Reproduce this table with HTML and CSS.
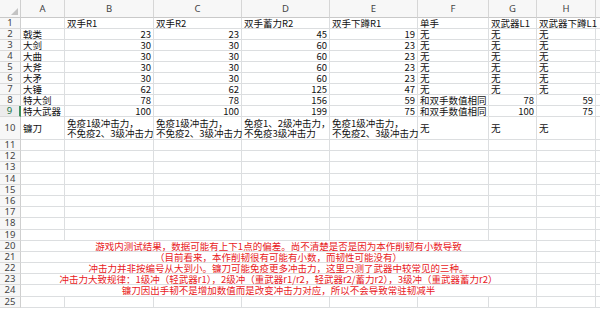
FILE: index.html
```html
<!DOCTYPE html>
<html lang="zh-CN">
<head>
<meta charset="utf-8">
<title>冲击力测试</title>
<link rel="stylesheet" href="styles.css">
</head>
<body>
<div class="sheet">
  <div class="corner"></div><div class="ch">A</div><div class="ch">B</div><div class="ch">C</div><div class="ch">D</div><div class="ch">E</div><div class="ch">F</div><div class="ch">G</div><div class="ch">H</div><div class="ch"></div>

  <div class="rh">1</div><div></div><div>双手R1</div><div>双手R2</div><div>双手蓄力R2</div><div>双手下蹲R1</div><div>单手</div><div>双武器L1</div><div>双武器下蹲L1</div><div></div>
  <div class="rh">2</div><div>戟类</div><div class="n">23</div><div class="n">23</div><div class="n">45</div><div class="n">19</div><div>无</div><div>无</div><div>无</div><div></div>
  <div class="rh">3</div><div>大剑</div><div class="n">30</div><div class="n">30</div><div class="n">60</div><div class="n">23</div><div>无</div><div>无</div><div>无</div><div></div>
  <div class="rh">4</div><div>大曲</div><div class="n">30</div><div class="n">30</div><div class="n">60</div><div class="n">23</div><div>无</div><div>无</div><div>无</div><div></div>
  <div class="rh">5</div><div>大斧</div><div class="n">30</div><div class="n">30</div><div class="n">60</div><div class="n">23</div><div>无</div><div>无</div><div>无</div><div></div>
  <div class="rh">6</div><div>大矛</div><div class="n">30</div><div class="n">30</div><div class="n">60</div><div class="n">23</div><div>无</div><div>无</div><div>无</div><div></div>
  <div class="rh">7</div><div>大锤</div><div class="n">62</div><div class="n">62</div><div class="n">125</div><div class="n">47</div><div>无</div><div>无</div><div>无</div><div></div>
  <div class="rh">8</div><div>特大剑</div><div class="n">78</div><div class="n">78</div><div class="n">156</div><div class="n">59</div><div>和双手数值相同</div><div class="n">78</div><div class="n">59</div><div></div>
  <div class="rh sel">9</div><div>特大武器</div><div class="n">100</div><div class="n">100</div><div class="n">199</div><div class="n">75</div><div>和双手数值相同</div><div class="n">100</div><div class="n">75</div><div></div>
  <div class="rh tall">10</div><div class="tall">镰刀</div><div class="tall">免疫1级冲击力，<br>不免疫2、3级冲击力</div><div class="tall">免疫1级冲击力，<br>不免疫2、3级冲击力</div><div class="tall">免疫1、2级冲击力，<br>不免疫3级冲击力</div><div class="tall">免疫1级冲击力，<br>不免疫2、3级冲击力</div><div class="tall">无</div><div class="tall">无</div><div class="tall">无</div><div></div>

  <div class="rh">11</div><div></div><div></div><div></div><div></div><div></div><div></div><div></div><div></div><div></div>
  <div class="rh">12</div><div></div><div></div><div></div><div></div><div></div><div></div><div></div><div></div><div></div>
  <div class="rh">13</div><div></div><div></div><div></div><div></div><div></div><div></div><div></div><div></div><div></div>
  <div class="rh">14</div><div></div><div></div><div></div><div></div><div></div><div></div><div></div><div></div><div></div>
  <div class="rh">15</div><div></div><div></div><div></div><div></div><div></div><div></div><div></div><div></div><div></div>
  <div class="rh">16</div><div></div><div></div><div></div><div></div><div></div><div></div><div></div><div></div><div></div>
  <div class="rh">17</div><div></div><div></div><div></div><div></div><div></div><div></div><div></div><div></div><div></div>
  <div class="rh">18</div><div></div><div></div><div></div><div></div><div></div><div></div><div></div><div></div><div></div>
  <div class="rh">19</div><div></div><div></div><div></div><div></div><div></div><div></div><div></div><div></div><div></div>
  <div class="rh">20</div><div class="note">游戏内测试结果，数据可能有上下1点的偏差。尚不清楚是否是因为本作削韧有小数导致</div><div></div><div></div>
  <div class="rh">21</div><div class="note">（目前看来，本作削韧很有可能有小数，而韧性可能没有）</div><div></div><div></div>
  <div class="rh">22</div><div class="note">冲击力并非按编号从大到小。镰刀可能免疫更多冲击力，这里只测了武器中较常见的三种。</div><div></div><div></div>
  <div class="rh">23</div><div class="note">冲击力大致规律：1级冲（轻武器r1），2级冲（重武器r1/r2，轻武器r2/蓄力r2），3级冲（重武器蓄力r2）</div><div></div><div></div>
  <div class="rh">24</div><div class="note">镰刀因出手韧不是增加数值而是改变冲击力对应，所以不会导致常驻韧减半</div><div></div><div></div>
  <div class="rh">25</div><div></div><div></div><div></div><div></div><div></div><div></div><div></div><div></div><div></div>
</div>
</body>
</html>
```
FILE: styles.css
```css
html, body {
  margin: 0;
  padding: 0;
  background: #ffffff;
  overflow: hidden;
}

body {
  font-family: "Noto Sans CJK SC", "Noto Sans", sans-serif;
  font-size: 9.5px;
  color: #111;
}

.sheet {
  display: grid;
  grid-template-columns: 21px 44px 89px 88px 88px 88px 71px 48px 59px 4px;
  grid-template-rows: 18px repeat(9, 11px) 23px repeat(15, 11.2px);
  width: 600px;
}

.sheet > div {
  box-sizing: border-box;
  border-right: 1px solid #dcdee0;
  border-bottom: 1px solid #dcdee0;
  padding: 0 2px;
  white-space: nowrap;
  line-height: 10px;
}

.sheet > .n {
  text-align: right;
}

.sheet > .corner {
  position: relative;
  background: #f7f7f7;
  border-right: 1px solid #cfcfcf;
  border-bottom: 1px solid #c9c9c9;
}

.sheet > .corner::after {
  content: "";
  position: absolute;
  right: 2px;
  bottom: 2px;
  width: 0;
  height: 0;
  border-left: 7px solid transparent;
  border-bottom: 7px solid #c3c3c3;
}

.sheet > .ch {
  background: #f7f7f7;
  color: #444;
  text-align: center;
  line-height: 18px;
  font-family: "Noto Sans", sans-serif;
  font-size: 9.5px;
  border-right: 1px solid #d6d6d6;
  border-bottom: 1px solid #c9c9c9;
}

.sheet > .rh {
  background: #f7f7f7;
  color: #444;
  text-align: center;
  padding: 0;
  font-family: "Noto Sans", sans-serif;
  font-size: 9.5px;
  border-right: 1px solid #cfcfcf;
  border-bottom: 1px solid #dadada;
}

.sheet > .rh.sel {
  color: #217346;
  background: #ececec;
  border-right: 2px solid #3f8f5c;
}

.sheet > .tall {
  display: flex;
  flex-direction: column;
  justify-content: center;
  line-height: 10.5px;
}

.sheet > .rh.tall {
  align-items: center;
}

.sheet > .note {
  grid-column: span 7;
  text-align: center;
  color: #e8191c;
}
```
